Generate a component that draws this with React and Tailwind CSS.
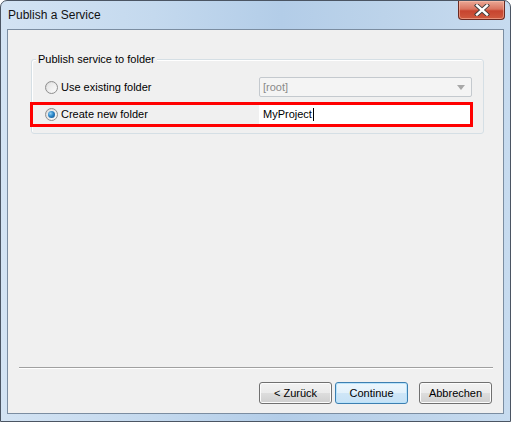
import React from "react";

const font = { fontFamily: '"Liberation Sans", Arial, sans-serif' };

function Radio({ checked }) {
  return (
    <span className="relative flex h-[13px] w-[13px] shrink-0 items-center justify-center rounded-full border border-[#8f8f8f] bg-gradient-to-br from-[#d6d6d6] to-[#fbfbfb]">
      <span className="h-[9px] w-[9px] rounded-full bg-gradient-to-br from-[#e4e4e4] to-[#fafafa] flex items-center justify-center">
        {checked && (
          <span className="h-[7px] w-[7px] rounded-full bg-[radial-gradient(circle_at_35%_35%,#8fd0f5_0%,#2a86c8_45%,#134d86_100%)]" />
        )}
      </span>
    </span>
  );
}

function Button({ children, primary }) {
  return (
    <div
      className={
        "flex h-[22px] w-[73px] items-center justify-center rounded-[3px] border text-[11px] text-black " +
        (primary
          ? "border-[#3c7fb1] bg-[linear-gradient(#ecf6fd_0%,#e3f1fb_50%,#cfe6f7_51%,#c6e2f6_100%)] shadow-[inset_0_0_0_1px_#b9e3fb]"
          : "border-[#707070] bg-[linear-gradient(#f2f2f2_0%,#ebebeb_50%,#dddddd_51%,#cfcfcf_100%)] shadow-[inset_0_0_0_1px_#fcfcfc]")
      }
    >
      {children}
    </div>
  );
}

export default function App() {
  return (
    <div style={font} className="h-[422px] w-[511px] bg-white">
      <div className="flex h-[422px] w-[511px] flex-col rounded-t-[7px] border border-[#4b5563] bg-[linear-gradient(90deg,#d3e3f3_0%,#c4d9ee_30%,#b3cde8_55%,#bcd3ea_75%,#c7dbef_100%)]">
        {/* Title bar */}
        <div className="relative flex h-[28px] shrink-0 items-start">
          <span className="ml-[7px] mt-[7px] text-[12px] leading-[14px] text-[#111]">Publish a Service</span>
          <div className="absolute right-[5px] top-0 flex h-[19px] w-[47px] items-center justify-center rounded-b-[4px] border border-t-0 border-[#6b2a22] bg-[linear-gradient(#eaa896_0%,#d9745f_45%,#c7442f_55%,#cf5a3f_100%)] shadow-[inset_0_0_0_1px_rgba(255,200,180,0.5)]">
            <svg width="16" height="12" viewBox="0 0 16 12">
              <path d="M3 1.5 L13 10.5 M13 1.5 L3 10.5" stroke="#3b3b3b" strokeWidth="4.2" strokeLinecap="square" />
              <path d="M3 1.5 L13 10.5 M13 1.5 L3 10.5" stroke="#ffffff" strokeWidth="2.4" strokeLinecap="square" />
            </svg>
          </div>
        </div>

        {/* Client area */}
        <div className="mx-[6px] flex h-[385px] flex-col border border-[#7b8da1] bg-[#f0f0f0]">
          {/* Group box */}
          <div className="relative ml-[23px] mt-[29px] w-[453px] rounded-[3px] border border-[#d5dfe5] px-0 pb-[6px] pt-[16px] shadow-[inset_1px_1px_0_#ffffff]">
            <span className="absolute left-[4px] top-[-8px] bg-[#f0f0f0] px-[2px] text-[11px] leading-[14px] text-black">
              Publish service to folder
            </span>
            {/* Row 1 */}
            <div className="flex h-[22px] items-center pl-[13px]">
              <div className="flex w-[214px] items-center">
                <Radio />
                <span className="ml-[3px] text-[11px] text-black">Use existing folder</span>
              </div>
              <div className="flex h-[20px] w-[213px] items-center justify-between rounded-[2px] border border-[#c4c9ce] bg-[#f4f4f4] pl-[3px] pr-[6px]">
                <span className="text-[11px] text-[#8a8a8a]">[root]</span>
                <svg width="8" height="5" viewBox="0 0 8 5">
                  <path d="M0 0 L8 0 L4 5 Z" fill="#a8a8a8" />
                </svg>
              </div>
            </div>
            {/* Row 2 */}
            <div className="-ml-[2px] mt-[4px] flex h-[25px] w-[443px] items-center border-[3px] border-[#ff0000] pl-[12px]">
              <div className="flex w-[214px] items-center">
                <Radio checked />
                <span className="ml-[3px] text-[11px] text-black">Create new folder</span>
              </div>
              <div className="flex h-[19px] w-[211px] items-center bg-white pl-[4px]">
                <span className="text-[11px] text-black">MyProject</span>
                <span className="ml-[1px] h-[13px] w-px bg-black" />
              </div>
            </div>
          </div>

          <div className="flex-1" />

          {/* Separator */}
          <div className="ml-[11px] mr-[10px] h-px bg-[#a0a0a0]" />
          <div className="ml-[11px] mr-[10px] h-px bg-white" />

          {/* Buttons */}
          <div className="mb-[9px] mt-[13px] flex justify-end pr-[11px]">
            <Button>&lt; Zurück</Button>
            <div className="w-[3px]" />
            <Button primary>Continue</Button>
            <div className="w-[11px]" />
            <Button>Abbrechen</Button>
          </div>
        </div>
        <div className="flex-1" />
      </div>
    </div>
  );
}
